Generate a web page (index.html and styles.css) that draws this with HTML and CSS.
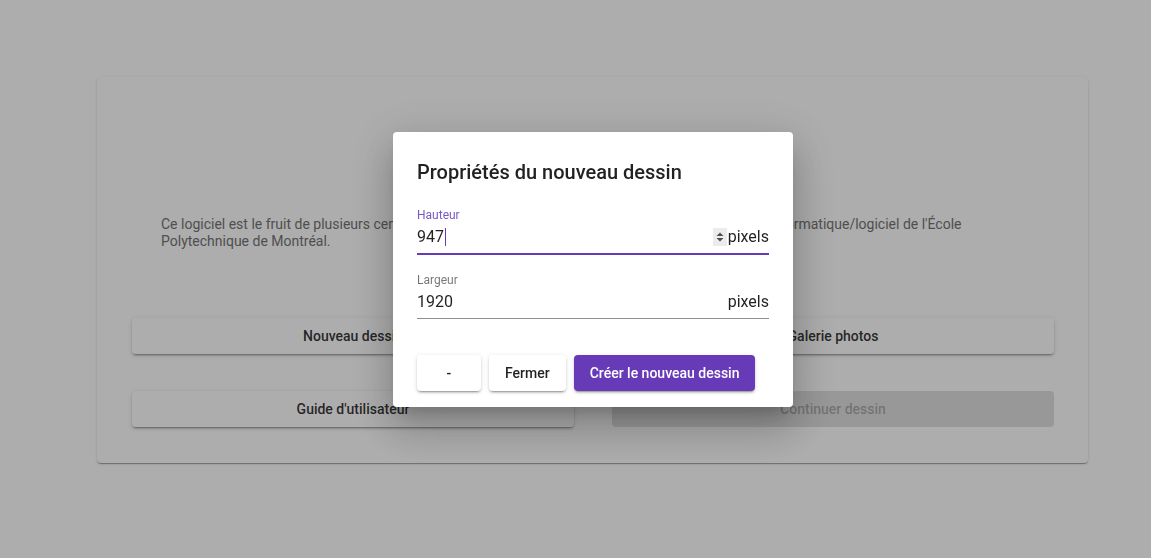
FILE: index.html
```html
<!DOCTYPE html>
<html lang="fr">
<head>
<meta charset="utf-8">
<title>Nouveau dessin</title>
<link rel="stylesheet" href="styles.css">
</head>
<body>
<div class="card">
  <p class="intro">Ce logiciel est le fruit de plusieurs centaines d'heures de travail acharné de nos étudiants en génie informatique/logiciel de l'École Polytechnique de Montréal.</p>
  <div class="menu">
    <button class="btn">Nouveau dessin</button>
    <button class="btn">Galerie photos</button>
    <button class="btn">Guide d'utilisateur</button>
    <button class="btn disabled">Continuer dessin</button>
  </div>
</div>

<div class="overlay">
  <div class="dialog">
    <h2 class="title">Propriétés du nouveau dessin</h2>
    <div class="field focused">
      <div class="label">Hauteur</div>
      <div class="row">
        <span class="value">947<span class="caret"></span></span>
        <span class="spin"><svg width="10" height="14" viewBox="0 0 10 14"><path d="M1.5 6 L5 2.5 L8.5 6 Z M1.5 8 L5 11.5 L8.5 8 Z" fill="#505050"/></svg></span>
        <span class="suffix">pixels</span>
      </div>
    </div>
    <div class="field">
      <div class="label">Largeur</div>
      <div class="row">
        <span class="value">1920</span>
        <span class="suffix">pixels</span>
      </div>
    </div>
    <div class="actions">
      <button class="dbtn">-</button>
      <button class="dbtn">Fermer</button>
      <button class="dbtn primary">Créer le nouveau dessin</button>
    </div>
  </div>
</div>
</body>
</html>
```
FILE: styles.css
```css
html, body {
  margin: 0;
  padding: 0;
  background: #fff;
  font-family: Roboto, "Liberation Sans", sans-serif;
  height: 100%;
  overflow: hidden;
}

.card {
  margin: 77px 63px 0 97px;
  height: 386px;
  box-sizing: border-box;
  background: #fff;
  border-radius: 4px;
  box-shadow: 0 2px 1px -1px rgba(0,0,0,.2), 0 1px 1px 0 rgba(0,0,0,.14), 0 1px 3px 0 rgba(0,0,0,.12);
  padding: 139px 34px 35px 35px;
}

.intro {
  margin: 0 70px 0 29px;
  font-size: 14px;
  line-height: 17px;
  color: #757575;
}

.menu {
  margin-top: 68px;
  display: grid;
  grid-template-columns: 1fr 1fr;
  column-gap: 38px;
  row-gap: 37px;
}

.btn {
  height: 36px;
  border: 0;
  border-radius: 4px;
  background: #fff;
  font-family: Roboto, "Liberation Sans", sans-serif;
  font-size: 14px;
  font-weight: 500;
  color: rgba(0,0,0,.8);
  box-shadow: 0 3px 1px -2px rgba(0,0,0,.2), 0 2px 2px 0 rgba(0,0,0,.14), 0 1px 5px 0 rgba(0,0,0,.12);
  padding: 0 16px;
}

.btn.disabled {
  background: rgba(0,0,0,.12);
  color: rgba(0,0,0,.26);
  box-shadow: none;
}

.overlay {
  position: fixed;
  inset: 0;
  background: rgba(0,0,0,.32);
  display: flex;
  align-items: center;
  justify-content: center;
  padding: 0 0 19px 35px;
}

.dialog {
  width: 400px;
  box-sizing: border-box;
  background: #fff;
  border-radius: 4px;
  padding: 24px 24px 16px;
  box-shadow: 0 11px 15px -7px rgba(0,0,0,.2), 0 24px 38px 3px rgba(0,0,0,.14), 0 9px 46px 8px rgba(0,0,0,.12);
}

.title {
  margin: 0 0 20px;
  font-size: 20px;
  line-height: 32px;
  font-weight: 500;
  color: rgba(0,0,0,.87);
}

.field {
  margin-bottom: 18px;
}

.label {
  font-size: 12px;
  line-height: 14px;
  color: rgba(0,0,0,.54);
}

.field.focused .label {
  color: #7e57c2;
}

.row {
  display: flex;
  align-items: center;
  margin-top: 5px;
  height: 20px;
  padding-bottom: 6px;
  border-bottom: 1px solid #8f8f8f;
  font-size: 16px;
  color: rgba(0,0,0,.87);
}

.field.focused .row {
  border-bottom: 2px solid #673ab7;
}

.value {
  flex: 1;
  display: flex;
  align-items: center;
  line-height: 20px;
}

.caret {
  display: inline-block;
  width: 1px;
  height: 18px;
  background: #673ab7;
  margin-left: 1px;
}

.spin {
  width: 14px;
  height: 18px;
  background: #ececec;
  display: flex;
  align-items: center;
  justify-content: center;
  margin-right: 1px;
}

.suffix {
  line-height: 20px;
  color: rgba(0,0,0,.87);
}

.actions {
  display: flex;
  gap: 8px;
  margin-top: 36px;
}

.dbtn {
  min-width: 64px;
  height: 36px;
  border: 0;
  border-radius: 4px;
  background: #fff;
  padding: 0 16px;
  font-family: Roboto, "Liberation Sans", sans-serif;
  font-size: 14px;
  font-weight: 500;
  color: rgba(0,0,0,.87);
  box-shadow: 0 3px 1px -2px rgba(0,0,0,.2), 0 2px 2px 0 rgba(0,0,0,.14), 0 1px 5px 0 rgba(0,0,0,.12);
}

.dbtn.primary {
  background: #673ab7;
  color: #fff;
}
```
